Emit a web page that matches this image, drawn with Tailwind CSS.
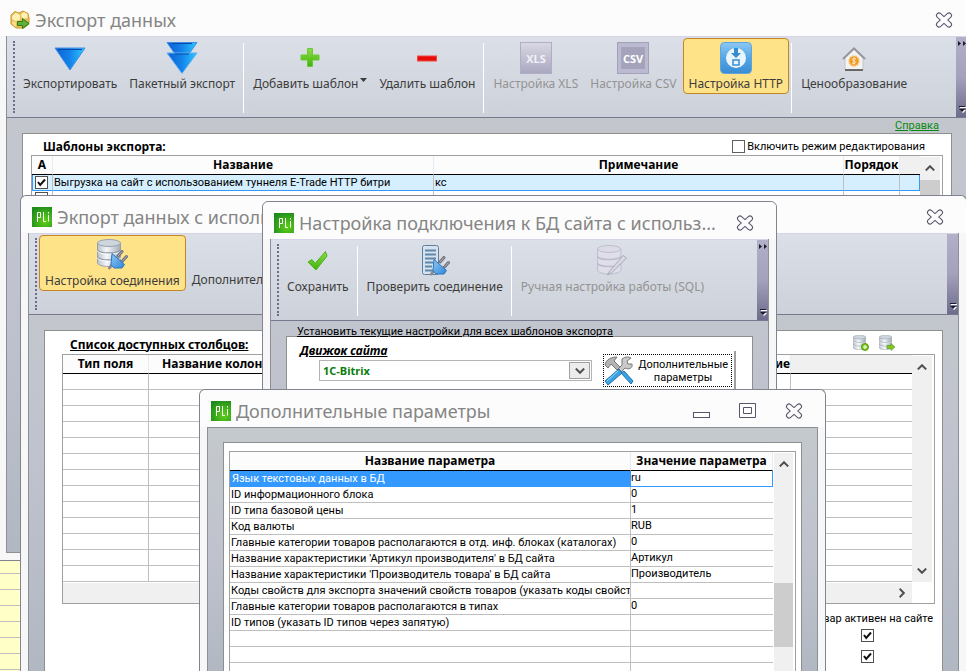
<!DOCTYPE html>
<html lang="ru">
<head>
  <meta charset="UTF-8" />
  <meta name="viewport" content="width=device-width, initial-scale=1.0"/>
  <title>Экспорт данных</title>
  <script src="https://cdn.jsdelivr.net/npm/@tailwindcss/browser@4"></script>
</head>
<body class="relative h-screen overflow-hidden bg-[#f7f7f7] font-['Roboto',sans-serif] text-[11px] leading-4 text-black">

  <!-- Shared icons -->
  <svg class="absolute size-0">
    <defs>
      <linearGradient id="blue" x1="0" x2="1"><stop offset="0" stop-color="#0b5fd0"/><stop offset=".5" stop-color="#1484ea"/><stop offset="1" stop-color="#2cc8ff"/></linearGradient>
      <linearGradient id="plug" x1="0" y1="0" x2="1" y2="1"><stop offset="0" stop-color="#8fcbf8"/><stop offset="1" stop-color="#2f86d8"/></linearGradient>
      <linearGradient id="metal" x1="0" x2="1"><stop offset="0" stop-color="#b9c2cc"/><stop offset=".4" stop-color="#f4f7fa"/><stop offset="1" stop-color="#a3adb8"/></linearGradient>
      <linearGradient id="green" x1="0" y1="0" x2="0" y2="1"><stop offset="0" stop-color="#8bdc48"/><stop offset="1" stop-color="#3fb40a"/></linearGradient>
      <linearGradient id="xls" x1="0" y1="0" x2="0" y2="1"><stop offset="0" stop-color="#d9d8e4"/><stop offset="1" stop-color="#a9a7bf"/></linearGradient>
      <linearGradient id="http" x1="0" y1="0" x2="0" y2="1"><stop offset="0" stop-color="#8cc8f2"/><stop offset=".5" stop-color="#55a6e4"/><stop offset="1" stop-color="#3a8cd4"/></linearGradient>
      <radialGradient id="logo-bg" cx=".65" cy=".7" r=".8"><stop offset="0" stop-color="#5fd01a"/><stop offset="1" stop-color="#1d8a1c"/></radialGradient>
    </defs>
    <symbol id="close" viewBox="0 0 18 16">
      <path d="M4 3.5 14 12.5M14 3.5 4 12.5" stroke="#55556c" stroke-width="6" stroke-linecap="round"/>
      <path d="M4 3.5 14 12.5M14 3.5 4 12.5" stroke="#fcfcfc" stroke-width="4" stroke-linecap="round"/>
    </symbol>
    <symbol id="logo" viewBox="0 0 20 20">
      <rect width="20" height="20" fill="url(#logo-bg)"/>
      <path d="M5.500 15V5.500H8.500V10.500H5.500M11.500 5V14.500H14M16.500 8V14.500M16.500 5V6.500" fill="none" stroke="#fff"/>
    </symbol>
    <symbol id="db" viewBox="0 0 24 28">
      <path d="M.5 4v20c0 2 5 3.500 11.500 3.500S23.500 26 23.500 24V4z" fill="url(#metal)" stroke="#98a2ae"/>
      <path d="M.5 10.500c0 2 5 3.500 11.500 3.500s11.500-1.500 11.500-3.500M.5 17.500c0 2 5 3.500 11.500 3.500s11.500-1.500 11.500-3.500" fill="none" stroke="#8f99a6" stroke-width="1.300"/>
      <path d="M.5 11.700c0 2 5 3.500 11.500 3.500s11.500-1.500 11.500-3.500M.5 18.700c0 2 5 3.500 11.500 3.500s11.500-1.500 11.500-3.500" fill="none" stroke="#fff"/>
      <ellipse cx="12" cy="4" rx="11.500" ry="3.500" fill="#cdd5dd" stroke="#98a2ae"/>
    </symbol>
    <symbol id="plug-in" viewBox="0 0 20 20">
      <path d="M10 6 14 1.500M14.500 11 18.500 6.500" stroke="#6f6f78" stroke-width="3" stroke-linecap="round"/>
      <path d="M10 6 14 1.500M14.500 11 18.500 6.500" stroke="#b5b5bc" stroke-linecap="round"/>
      <path d="M4 14.500 1.500 18" stroke="#8a8a94" stroke-width="3" stroke-linecap="round"/>
      <path d="M4 3.500 16.500 14.500 14 18H6L3 14.500z" fill="url(#plug)" stroke="#2c73bd"/>
    </symbol>
    <symbol id="up" viewBox="0 0 10 6"><path d="M.8 5.400 5 1.200 9.200 5.400" fill="none" stroke="#505050" stroke-width="2"/></symbol>
    <symbol id="down" viewBox="0 0 10 6"><path d="M.8.600 5 4.800 9.200.600" fill="none" stroke="#505050" stroke-width="2"/></symbol>
    <symbol id="check" viewBox="0 0 13 13"><path d="M3 6 5.200 9 10 3.500" fill="none" stroke="#111" stroke-width="2"/></symbol>
    <symbol id="more" viewBox="0 0 8 5"><path d="M0 0 3 2.500 0 5zM5 0 8 2.500 5 5z" fill="#1c1c28"/></symbol>
    <symbol id="options" viewBox="0 0 8 8"><path d="M2 2h6v1H2zM2 5h6L5 8z" fill="#fff"/><path d="M1 1h6v1H1zM1 4h6L4 7z" fill="#1c1c28"/></symbol>
  </svg>

  <!-- Background grid -->
  <div id="desktop-rows" class="absolute inset-x-0 top-[558px] bg-[#ffffc8]"></div>

  <!-- Window: export -->
  <section class="absolute -top-0.5 -left-0.5 -right-[10px] flex h-[563px] flex-col border border-[#7f8490] bg-[#f7f7f7] px-[7px] pb-[7px]">
    <header class="-mx-[7px] flex h-[37px] shrink-0 items-center bg-[#fcfcfc] pt-1 pr-2 pl-[11px]">
      <svg class="size-5" viewBox="0 0 20 20">
        <path d="M1 5 5 1.500 9 3 13 1 18 3.500 19 8V14L14 18H6L1 14z" fill="#e9bd52" stroke="#c8962c"/>
        <path d="M2 6 6 2.500 10 5V10L5 11 2 9zM11 4 14 2 17.500 4V8L12 9z" fill="#fff0b4"/>
        <path d="M2 11 6 12V17L2 14z" fill="#f7dc8c"/>
        <path d="M7.500 11.500H12.500V8.500L19 13.500 12.500 18.500V15.500H7.500z" fill="#5fae3a" stroke="#2c7d1c"/>
      </svg>
      <h1 class="ml-[5px] flex-1 truncate font-['Noto_Sans',sans-serif] text-[18px] leading-6 text-[#858585]">Экспорт данных</h1>
      <button class="flex w-[46px] justify-center" aria-label="Закрыть"><svg class="h-4 w-[18px]"><use href="#close"/></svg></button>
    </header>
    <div class="flex flex-1 flex-col border border-t-0 border-[#8b8f96] bg-linear-to-b from-[#c4c9cc] via-[#c0c3ce] to-[#b1b8c2]">
      <div class="flex h-[82px] shrink-0 items-start border-t border-b border-t-[#d5d3e6] border-b-[#77778f] bg-linear-to-b from-[#dbdfe7] to-[#cdd2da] pl-1.5 font-['Noto_Sans',sans-serif] text-[12px] text-[#3c3c3c]">
        <i class="mt-1 mr-0.5 h-[72px] w-0 border-l-2 border-dotted border-[#6c6c8c]"></i>
        <button class="mt-px flex h-14 flex-col items-center border border-transparent px-[5px] pt-[3px] leading-5 whitespace-nowrap">
          <svg class="size-8 shrink-0" viewBox="0 0 32 32"><path d="M1 6H31L16 28z" fill="url(#blue)" stroke="#3c8ee6"/><path d="M4 7.500H28" stroke="#0a4ba8"/></svg>
          <span>Экспортировать</span>
        </button>
        <button class="mt-px flex h-14 flex-col items-center border border-transparent px-[5px] pt-[3px] leading-5 whitespace-nowrap">
          <svg class="size-8 shrink-0" viewBox="0 0 32 32"><path d="M1 .5H31L16 22z" fill="url(#blue)" stroke="#3c8ee6"/><path d="M1 11H31L16 31.500z" fill="url(#blue)" stroke="#5cb0f4"/><path d="M6 1.500H26M9 12h14" stroke="#0a4ba8"/></svg>
          <span>Пакетный экспорт</span>
        </button>
        <i class="mt-1.5 mr-[3px] ml-0.5 h-[70px] w-px bg-white"></i>
        <button class="mt-px flex h-14 flex-col items-center border border-transparent px-[5px] pt-[3px] leading-5 whitespace-nowrap">
          <svg class="size-8 shrink-0" viewBox="0 0 32 32"><path d="M13.500 6.500h5V13h6.500v5h-6.500v6.500h-5V18H7v-5h6.500z" fill="url(#green)" stroke="#6cc832"/></svg>
          <span class="flex gap-0.5">Добавить шаблон<svg class="mt-1 h-1 w-[7px]" viewBox="0 0 7 4"><path d="M0 0h7L3.500 4z" fill="#3c3c3c"/></svg></span>
        </button>
        <button class="mt-px flex h-14 flex-col items-center border border-transparent px-[5px] pt-[3px] leading-5 whitespace-nowrap">
          <svg class="size-8 shrink-0" viewBox="0 0 32 32"><rect x="6.500" y="14" width="19" height="5" fill="#e80c0c" stroke="#f04a3c"/></svg>
          <span>Удалить шаблон</span>
        </button>
        <i class="mt-1.5 mr-[3px] ml-0.5 h-[70px] w-px bg-white"></i>
        <button class="mt-px flex h-14 flex-col items-center border border-transparent px-[5px] pt-[3px] leading-5 whitespace-nowrap text-[#939393]">
          <svg class="size-8 shrink-0" viewBox="0 0 32 32"><rect x=".5" y=".5" width="31" height="31" fill="url(#xls)" stroke="#b0aec4"/><text x="16" y="21" text-anchor="middle" font-family="Open Sans" font-size="11" font-weight="700" fill="#f2f1f8">XLS</text></svg>
          <span>Настройка XLS</span>
        </button>
        <button class="mt-px flex h-14 flex-col items-center border border-transparent px-[5px] pt-[3px] leading-5 whitespace-nowrap text-[#939393]">
          <svg class="size-8 shrink-0" viewBox="0 0 32 32"><rect x=".5" y=".5" width="31" height="31" fill="#bcbad0" stroke="#a3a1ba"/><rect x="4" y="5" width="24" height="22" fill="#a5a3bc"/><text x="16" y="21" text-anchor="middle" font-family="Open Sans" font-size="11" font-weight="700" fill="#fff">CSV</text></svg>
          <span>Настройка CSV</span>
        </button>
        <button class="mt-px flex h-14 flex-col items-center rounded-sm border border-[#c58428] bg-[#ffe389] px-[5px] pt-[3px] leading-5 whitespace-nowrap">
          <svg class="size-8 shrink-0" viewBox="0 0 32 32"><rect x=".5" y=".5" width="31" height="31" rx="4" fill="url(#http)" stroke="#5da4dc"/><circle cx="16" cy="16" r="10" fill="#eaf5fd"/><path d="M14 6h4v5h3l-5 5-5-5h3z" fill="#3a8cd0"/><rect x="13" y="18" width="6" height="5" fill="none" stroke="#3a8cd0" stroke-width="1.500"/></svg>
          <span>Настройка HTTP</span>
        </button>
        <i class="mt-1.5 mr-[3px] ml-0.5 h-[70px] w-px bg-white"></i>
        <button class="mt-px flex h-14 flex-col items-center border border-transparent px-[5px] pt-[3px] leading-5 whitespace-nowrap">
          <svg class="size-8 shrink-0" viewBox="0 0 32 32"><path d="M7 15 16 7 25 15V28H7z" fill="#f3f3f3" stroke="#c4c4c4"/><path d="M7 28h18" stroke="#444" stroke-width="1.500"/><path d="M5 17 16 6.500 27 17" fill="none" stroke="#96969c" stroke-width="2"/><circle cx="16" cy="19" r="5" fill="#f39a26" stroke="#f8c470" stroke-width="1.500" stroke-dasharray="2 1"/><path d="M18 17c-3-1.500-5 1-2 2s1 3.500-2 2M16 15.500v7" fill="none" stroke="#fff1d2"/></svg>
          <span>Ценообразование</span>
        </button>
        <div class="ml-auto flex w-[11px] flex-col items-center justify-between self-stretch bg-linear-to-b from-[#b2b0c8] via-[#a3a1bb] to-[#6e6c8c] py-1">
          <svg class="h-[5px] w-2"><use href="#more"/></svg>
          <svg class="size-2"><use href="#options"/></svg>
        </div>
      </div>
      <div class="flex h-[15px] justify-end pr-7"><a href="#" class="text-[#0a8a10] underline">Справка</a></div>
      <div class="mx-[15px] mb-[15px] flex flex-1 flex-col border border-[#8f8f8f] bg-white px-2 pb-2">
        <div class="flex h-[21px] items-center justify-between pt-1 pr-[18px] pl-3">
          <h2 class="font-['Noto_Sans',sans-serif] text-[12px] font-bold">Шаблоны экспорта:</h2>
          <label class="flex items-center gap-0.5"><input type="checkbox" class="size-[13px] appearance-none border border-[#606060] bg-white">Включить режим редактирования</label>
        </div>
        <div class="flex flex-1 items-stretch border border-[#a0a0a0]">
          <div class="flex-1">
            <table class="w-full table-fixed border-separate border-spacing-0">
              <colgroup><col class="w-[21px]"><col class="w-[381px]"><col><col class="w-14"><col class="w-5"></colgroup>
              <thead>
                <tr class="h-[19px] bg-[#fcfcfc] font-['Noto_Sans',sans-serif] text-[12px] whitespace-nowrap">
                  <th class="border-r border-b border-r-[#e4ecf8] border-b-black p-0">А</th>
                  <th class="border-r border-b border-r-[#e4ecf8] border-b-black p-0">Название</th>
                  <th class="border-r border-b border-r-[#e4ecf8] border-b-black p-0">Примечание</th>
                  <th class="border-r border-b border-r-[#e4ecf8] border-b-black p-0">Порядок</th>
                  <th class="border-b border-b-black bg-[#f0f0f0] p-0"></th>
                </tr>
              </thead>
              <tbody>
                <tr class="h-4 bg-[#d5efff]">
                  <td class="border-r border-b border-l border-r-[#bfbfbf] border-b-[#3399ff] border-l-[#3399ff] p-0 pl-0.5">
                    <span class="relative block size-[13px]"><input type="checkbox" checked aria-label="Активен" class="block size-[13px] appearance-none border border-[#505050] bg-white"><svg class="pointer-events-none absolute inset-0 size-[13px]"><use href="#check"/></svg></span>
                  </td>
                  <td class="truncate border-r border-b border-r-[#bfbfbf] border-b-[#3399ff] p-0 pt-px pl-px leading-[14px]">Выгрузка на сайт с использованием туннеля E-Trade HTTP битри</td>
                  <td class="border-r border-b border-r-[#bfbfbf] border-b-[#3399ff] p-0 pt-px pl-px leading-[14px]">кс</td>
                  <td class="border-r border-b border-r-[#bfbfbf] border-b-[#3399ff] p-0"></td>
                  <td class="border-r border-b border-[#3399ff] p-0"></td>
                </tr>
                <tr class="h-4">
                  <td class="border-r border-b border-[#bfbfbf] p-0 pl-[3px]"><input type="checkbox" aria-label="Активен" class="block size-[13px] appearance-none border border-[#505050] bg-white"></td>
                  <td class="border-r border-b border-[#bfbfbf] p-0"></td>
                  <td class="border-r border-b border-[#bfbfbf] p-0"></td>
                  <td class="border-r border-b border-[#bfbfbf] p-0"></td>
                  <td class="border-b border-[#bfbfbf] p-0"></td>
                </tr>
              </tbody>
            </table>
          </div>
          <div class="mt-px mr-0.5 flex w-5 flex-col bg-[#f0f0f0]">
            <svg class="mx-auto mt-2 h-1.5 w-2.5"><use href="#up"/></svg>
            <div class="mt-[9px] h-24 bg-[#cdcdcd]"></div>
          </div>
        </div>
      </div>
    </div>
  </section>

  <!-- Window: export through the tunnel -->
  <section class="absolute top-[195px] -right-px bottom-0 left-5 flex flex-col overflow-hidden rounded-t-md border border-b-0 border-[#7f8490] bg-[#f7f7f7] px-[7px]">
    <header class="-mx-[7px] flex h-[37px] shrink-0 items-center rounded-t-md bg-[#fcfcfc] pt-1 pr-2 pl-[11px]">
      <svg class="size-5"><use href="#logo"/></svg>
      <h2 class="ml-[5px] flex-1 truncate font-['Noto_Sans',sans-serif] text-[18px] leading-6 text-[#858585]">Экпорт данных с использованием туннеля</h2>
      <button class="flex w-[46px] justify-center" aria-label="Закрыть"><svg class="h-4 w-[18px]"><use href="#close"/></svg></button>
    </header>
    <div class="flex flex-1 flex-col border border-y-0 border-[#8b8f96] bg-linear-to-b from-[#c4c9cc] via-[#c0c3ce] to-[#b1b8c2]">
      <div class="flex h-[82px] shrink-0 items-start border-t border-b border-t-[#d5d3e6] border-b-[#77778f] bg-linear-to-b from-[#dbdfe7] to-[#cdd2da] pl-1.5 font-['Noto_Sans',sans-serif] text-[12px] text-[#3c3c3c]">
        <i class="mt-1 mr-0.5 h-[72px] w-0 border-l-2 border-dotted border-[#6c6c8c]"></i>
        <button class="mt-px flex h-14 flex-col items-center rounded-sm border border-[#c58428] bg-[#ffe389] px-[5px] pt-[3px] leading-5 whitespace-nowrap">
          <svg class="size-8 shrink-0"><use href="#db" x="1" width="24" height="28"/><use href="#plug-in" x="12" y="11" width="20" height="20"/></svg>
          <span>Настройка соединения</span>
        </button>
        <button class="mt-px flex h-14 flex-col items-center border border-transparent px-[5px] pt-[3px] leading-5 whitespace-nowrap">
          <span class="h-8"></span>
          <span>Дополнительно</span>
        </button>
        <div class="ml-auto flex w-[11px] flex-col items-center justify-end self-stretch bg-linear-to-b from-[#b2b0c8] via-[#a3a1bb] to-[#6e6c8c] py-1">
          <svg class="size-2"><use href="#options"/></svg>
        </div>
      </div>
      <div class="mx-[15px] mt-[15px] flex flex-1 flex-col border border-b-0 border-[#8f8f8f] bg-white pr-[7px] pl-[17px]">
        <div class="flex h-[23px] items-center justify-between pt-1 pr-10 pl-2">
          <h3 class="font-['Noto_Sans',sans-serif] text-[12px] font-bold underline">Список доступных столбцов:</h3>
          <div class="flex gap-2.5 pb-1">
            <button aria-label="Добавить столбец"><svg class="size-4" viewBox="0 0 16 16"><use href="#db" width="13" height="15"/><circle cx="12" cy="12" r="3.500" fill="#7cc81e" stroke="#5a9c10"/><path d="M10 12h4M12 10v4" stroke="#fff"/></svg></button>
            <button aria-label="Перенести столбец"><svg class="size-4" viewBox="0 0 16 16"><use href="#db" width="13" height="15"/><path d="M8 10.500h4V8.500L16 12l-4 3.500V13.500H8z" fill="#7cc81e" stroke="#5a9c10" stroke-width=".6"/></svg></button>
          </div>
        </div>
        <div class="border border-[#a0a0a0]">
          <div class="flex">
            <table class="flex-1 table-fixed border-separate border-spacing-0">
              <colgroup><col class="w-[86px]"><col class="w-[143px]"><col><col class="w-[70px]"><col class="w-[121px]"></colgroup>
              <thead>
                <tr class="h-[19px] bg-[#fcfcfc] font-['Noto_Sans',sans-serif] text-[12px] whitespace-nowrap">
                  <th class="border-r border-b border-r-[#e4ecf8] border-b-black p-0">Тип поля</th>
                  <th class="border-r border-b border-r-[#e4ecf8] border-b-black p-0">Название колонки</th>
                  <th class="border-r border-b border-r-[#e4ecf8] border-b-black p-0">Значение</th>
                  <th class="border-r border-b border-r-[#e4ecf8] border-b-black p-0 text-right">Описание</th>
                  <th class="border-b border-b-black bg-[#f0f0f0] p-0"></th>
                </tr>
              </thead>
              <tbody id="column-rows"></tbody>
            </table>
            <div class="mt-px mr-0.5 flex w-5 flex-col items-center justify-between bg-[#f0f0f0] py-2">
              <svg class="h-1.5 w-2.5"><use href="#up"/></svg>
              <svg class="h-1.5 w-2.5"><use href="#down"/></svg>
            </div>
          </div>
          <div class="mt-px mr-[22px] flex h-5 items-center justify-end bg-[#f0f0f0] pr-[5px]">
            <svg class="h-1.5 w-2.5 -rotate-90"><use href="#down"/></svg>
          </div>
        </div>
        <div class="flex flex-col items-end pt-[7px] pr-0.5">
          <span>Товар активен на сайте</span>
          <span class="relative mt-0.5 mr-[59px] size-[13px]"><input type="checkbox" checked aria-label="Товар активен на сайте" class="block size-[13px] appearance-none border border-[#505050] bg-white"><svg class="pointer-events-none absolute inset-0 size-[13px]"><use href="#check"/></svg></span>
          <span class="relative mt-2 mr-[59px] size-[13px]"><input type="checkbox" checked aria-label="Обновлять товар" class="block size-[13px] appearance-none border border-[#505050] bg-white"><svg class="pointer-events-none absolute inset-0 size-[13px]"><use href="#check"/></svg></span>
        </div>
      </div>
    </div>
  </section>

  <!-- Window: site connection -->
  <section class="absolute top-[201px] left-[262px] flex h-80 w-[515px] flex-col rounded-t-md border border-[#7f8490] bg-[#f7f7f7] px-[7px]">
    <header class="-mx-[7px] flex h-[37px] shrink-0 items-center rounded-t-md bg-[#fcfcfc] pt-1 pr-2 pl-[11px]">
      <svg class="size-5"><use href="#logo"/></svg>
      <h2 class="ml-[5px] flex-1 truncate font-['Noto_Sans',sans-serif] text-[18px] leading-6 text-[#858585]">Настройка подключения к БД сайта с использ...</h2>
      <button class="flex w-[46px] justify-center" aria-label="Закрыть"><svg class="h-4 w-[18px]"><use href="#close"/></svg></button>
    </header>
    <div class="flex flex-1 flex-col border border-t-0 border-[#8b8f96] bg-linear-to-b from-[#c4c9cc] via-[#c0c3ce] to-[#b1b8c2]">
      <div class="flex h-[82px] shrink-0 items-start border-t border-b border-t-[#d5d3e6] border-b-[#77778f] bg-linear-to-b from-[#dbdfe7] to-[#cdd2da] pl-1.5 font-['Noto_Sans',sans-serif] text-[12px] text-[#3c3c3c]">
        <i class="mt-1 mr-0.5 h-[72px] w-0 border-l-2 border-dotted border-[#6c6c8c]"></i>
        <button class="mt-px flex h-14 flex-col items-center border border-transparent px-[5px] pt-[3px] leading-5 whitespace-nowrap">
          <svg class="size-8 shrink-0" viewBox="0 0 32 32"><path d="M6 17 10 14.500 13 18.500 23.500 6.500 25 11 14 25z" fill="url(#green)" stroke="#4cae1a"/></svg>
          <span>Сохранить</span>
        </button>
        <i class="mt-1.5 mr-[3px] ml-0.5 h-[70px] w-px bg-white"></i>
        <button class="mt-px flex h-14 flex-col items-center border border-transparent px-[5px] pt-[3px] leading-5 whitespace-nowrap">
          <svg class="size-8 shrink-0"><rect x="3.500" y=".5" width="16" height="29" rx="2" fill="#d7e2ec" stroke="#5c7f9e"/><path d="M6 5.500h11M6 9.500h11M6 13.500h11M6 17.500h8M6 21.500h7M6 25.500h9" stroke="#5f86ab" stroke-width="2"/><use href="#plug-in" x="11" y="11" width="20" height="20"/></svg>
          <span>Проверить соединение</span>
        </button>
        <i class="mt-1.5 mr-[3px] ml-0.5 h-[70px] w-px bg-white"></i>
        <button class="mt-px flex h-14 flex-col items-center border border-transparent px-[5px] pt-[3px] leading-5 whitespace-nowrap text-[#939393]">
          <svg class="size-8 shrink-0 opacity-70" viewBox="0 0 32 32"><path d="M1.500 4v21c0 2 5 4 11.500 4s12-2 12-4V4z" fill="#e2dfeb" stroke="#b5b2c6"/><path d="M1.500 11c0 2 5 3.500 11.500 3.500S25 13 25 11M1.500 18c0 2 5 3.500 11.500 3.500S25 20 25 18" fill="none" stroke="#b1aec4" stroke-width="1.500"/><ellipse cx="13" cy="4" rx="11.500" ry="3.500" fill="#dcd9e6" stroke="#b5b2c6"/><path d="M13 27 27 10.500 30.500 13 16 27.500 11.500 30z" fill="#d8d5e4" stroke="#9a97b0"/></svg>
          <span>Ручная настройка работы (SQL)</span>
        </button>
        <div class="ml-auto flex w-[11px] flex-col items-center justify-between self-stretch bg-linear-to-b from-[#b2b0c8] via-[#a3a1bb] to-[#6e6c8c] py-1">
          <svg class="h-[5px] w-2"><use href="#more"/></svg>
          <svg class="size-2"><use href="#options"/></svg>
        </div>
      </div>
      <div class="z-10 flex h-[15px] items-end pl-[26px]"><a href="#" class="-mb-1 text-black underline">Установить текущие настройки для всех шаблонов экспорта</a></div>
      <div class="mx-[15px] flex flex-1 items-start gap-2 border border-b-0 border-[#8f8f8f] bg-white pr-4 pl-[13px]">
        <div class="flex flex-1 flex-col pt-1.5">
          <label for="engine" class="mb-px font-['Noto_Sans',sans-serif] text-[12px] font-bold italic underline">Движок сайта</label>
          <div class="relative ml-[19px] flex">
            <select id="engine" class="h-[21px] flex-1 appearance-none border border-[#b4b4b4] bg-white pl-[3px] font-['Noto_Sans',sans-serif] text-[11px] font-bold text-[#0a7d0a]"><option>1C-Bitrix</option></select>
            <span class="pointer-events-none absolute inset-y-0.5 right-0.5 flex w-[21px] items-center justify-center border border-[#a0a0a0] bg-[#ececec]"><svg class="h-1.5 w-2.5"><use href="#down"/></svg></span>
          </div>
        </div>
        <button class="mt-3.5 flex border-r-2 border-b-2 border-[#a0a0a0] bg-white p-[3px] pr-0.5">
          <span class="flex h-[33px] items-center border border-dotted border-black pr-[3px]">
            <svg class="size-[30px]" viewBox="0 0 30 30"><path d="M1 9C2 3 8 1 13 1L10 5 16 11 13 14 7 8 4 12z" fill="#b4b4b4" stroke="#777"/><path d="M18 3c4-3 7-2 9-1l-4 3 1 3 4 0c1 4-3 6-7 4l-4 4-3-3 4-4z" fill="#c9c9c9" stroke="#777"/><path d="M15 13 1 25 4 29 18 17z" fill="#3ba2e2" stroke="#1b73b4"/><path d="M17 17 27 28 29 25 20 15z" fill="#3ba2e2" stroke="#1b73b4"/><path d="M14 15 3 25" stroke="#9fd8fa"/></svg>
            <span class="ml-1 text-center leading-[13px]">Дополнительные<br>параметры</span>
          </span>
        </button>
      </div>
    </div>
  </section>

  <!-- Window: extra parameters -->
  <section class="absolute top-[389px] bottom-0 left-[199px] flex w-[627px] flex-col overflow-hidden rounded-t-md border border-b-0 border-[#7f8490] bg-[#f7f7f7] px-[7px]">
    <header class="-mx-[7px] flex h-[37px] shrink-0 items-center rounded-t-md bg-[#fcfcfc] pt-1 pr-2 pl-[11px]">
      <svg class="size-5"><use href="#logo"/></svg>
      <h2 class="ml-[5px] flex-1 truncate font-['Noto_Sans',sans-serif] text-[18px] leading-6 text-[#858585]">Дополнительные параметры</h2>
      <button class="flex w-[46px] justify-center" aria-label="Свернуть"><svg class="h-4 w-[18px]" viewBox="0 0 18 16"><rect x=".5" y="9.500" width="16" height="5" fill="#fff" stroke="#55556c"/></svg></button>
      <button class="flex w-[46px] justify-center" aria-label="Развернуть"><svg class="h-4 w-[18px]" viewBox="0 0 18 16"><path d="M.5.500h16v14H.5zM4.500 4.500h8v6h-8z" fill="#fff" stroke="#55556c"/></svg></button>
      <button class="flex w-[46px] justify-center" aria-label="Закрыть"><svg class="h-4 w-[18px]"><use href="#close"/></svg></button>
    </header>
    <div class="flex min-h-0 flex-1 flex-col border border-b-0 border-[#8b8f96] bg-linear-to-b from-[#c4c9cc] via-[#c0c3ce] to-[#b1b8c2] px-[15px] pt-3.5">
      <div class="flex min-h-0 flex-1 flex-col border border-b-0 border-[#8f8f8f] bg-white px-[5px] pt-2">
        <div class="flex min-h-0 flex-1 overflow-hidden border border-b-0 border-[#a0a0a0]">
          <div class="flex-1">
            <table class="w-full table-fixed border-separate border-spacing-0">
              <colgroup><col><col class="w-[142px]"></colgroup>
              <thead>
                <tr class="h-[19px] bg-[#fcfcfc] font-['Noto_Sans',sans-serif] text-[12px] whitespace-nowrap">
                  <th class="border-r border-b border-r-[#e4ecf8] border-b-black p-0">Название параметра</th>
                  <th class="border-r border-b border-r-[#e4ecf8] border-b-black p-0">Значение параметра</th>
                </tr>
              </thead>
              <tbody id="param-rows"></tbody>
            </table>
          </div>
          <div class="mt-px mr-0.5 ml-px flex w-[19px] flex-col bg-[#f0f0f0]">
            <svg class="mx-auto mt-2 h-1.5 w-2.5"><use href="#up"/></svg>
            <div class="mt-[116px] h-16 bg-[#cdcdcd]"></div>
          </div>
        </div>
      </div>
    </div>
  </section>

  <script>
    const params = [
      ['Язык текстовых данных в БД', 'ru'],
      ['ID информационного блока', '0'],
      ['ID типа базовой цены', '1'],
      ['Код валюты', 'RUB'],
      ['Главные категории товаров располагаются в отд. инф. блоках (каталогах)', '0'],
      ["Название характеристики 'Артикул производителя' в БД сайта", 'Артикул'],
      ["Название характеристики 'Производитель товара' в БД сайта", 'Производитель'],
      ['Коды свойств для экспорта значений свойств товаров (указать коды свойств', ''],
      ['Главные категории товаров располагаются в типах', '0'],
      ['ID типов (указать ID типов через запятую)', ''],
      ['', ''], ['', ''], ['', '']
    ];

    document.getElementById('param-rows').innerHTML = params.map(([name, value], i) => i === 0 ? `
      <tr class="h-4">
        <td class="overflow-hidden border-b border-[#3399ff] bg-[#3399ff] p-0 pt-px pl-0.5 leading-[14px] whitespace-nowrap text-white">${name}</td>
        <td class="border-r border-b border-[#3399ff] p-0 align-top"><input aria-label="${name}" value="${value}" class="block h-[13px] w-full leading-[13px] outline-none"></td>
      </tr>` : `
      <tr class="h-4">
        <td class="overflow-hidden border-r border-b border-[#bfbfbf] p-0 pt-px pl-px leading-[14px] whitespace-nowrap">${name}</td>
        <td class="border-b border-[#bfbfbf] p-0 align-top leading-[13px]">${value}</td>
      </tr>`).join('');

    document.getElementById('column-rows').innerHTML = `
      <tr class="h-4">
        <td class="border-r border-b border-[#bfbfbf] p-0"></td>
        <td class="border-r border-b border-[#bfbfbf] p-0"></td>
        <td class="border-r border-b border-[#bfbfbf] p-0"></td>
        <td class="border-r border-b border-[#bfbfbf] p-0"></td>
        <td class="border-b border-[#bfbfbf] p-0"></td>
      </tr>`.repeat(13);

    document.getElementById('desktop-rows').innerHTML = '<div class="h-4 border-b border-[#bfbfbf]"></div>'.repeat(8);
  </script>
</body>
</html>
